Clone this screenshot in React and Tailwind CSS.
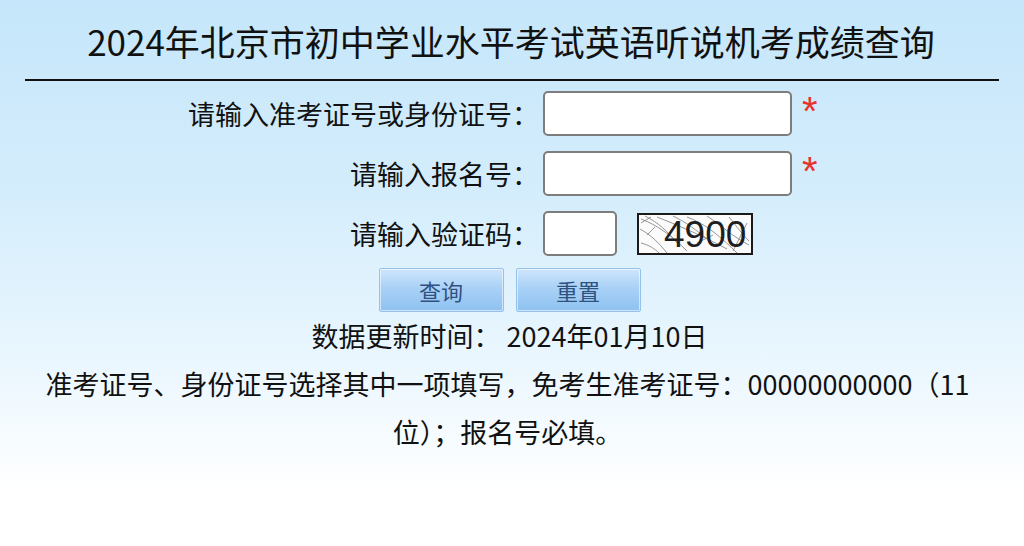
import React from "react";

const font = { fontFamily: '"Noto Sans CJK SC", "Noto Sans", sans-serif' };

function Captcha() {
  return (
    <svg width="116" height="42" viewBox="0 0 116 42" className="ml-[20px] block">
      <rect x="1" y="1" width="114" height="40" fill="#fbfbfb" stroke="#1a1a1a" strokeWidth="2" />
      <g stroke="#8a8a8a" strokeWidth="0.9" fill="none">
        <path d="M4 6 C20 12 34 22 50 38" />
        <path d="M8 3 C22 10 30 18 40 30" />
        <path d="M3 16 C14 22 22 30 30 40" />
        <path d="M20 4 C40 12 60 20 90 36" />
        <path d="M36 3 C50 10 58 16 70 26" />
        <path d="M50 4 C66 10 80 20 100 40" />
        <path d="M70 3 C84 12 96 24 112 32" />
        <path d="M4 30 C12 32 18 36 22 40" />
        <path d="M92 4 C100 14 106 22 112 28" />
        <path d="M10 22 L18 14" />
        <path d="M60 30 L76 22" />
        <path d="M96 38 L110 10" />
        <path d="M4 10 L14 4" />
      </g>
      <text
        x="27"
        y="34"
        fontSize="37"
        fill="#1e1e1e"
        style={{ fontFamily: '"Liberation Sans", Arial, sans-serif' }}
      >
        4900
      </text>
    </svg>
  );
}

function Btn({ children }) {
  return (
    <button className="w-[125px] h-[44px] rounded-[2px] border border-[#94c2ec] bg-[linear-gradient(to_bottom,#cfe6fc_0%,#a9d1f6_45%,#8ec2f1_100%)] shadow-[inset_0_0_0_1px_rgba(255,255,255,0.55)] text-[22px] text-[#2f5281] flex items-center justify-center leading-none">
      {children}
    </button>
  );
}

function Star() {
  return (
    <div
      className="ml-[10px] text-[#e8332a] text-[40px] leading-none -mt-[6px]"
      style={{ fontFamily: '"Liberation Sans", Arial, sans-serif' }}
    >
      *
    </div>
  );
}

export default function App() {
  return (
    <div
      className="w-[1024px] min-h-[546px] bg-[linear-gradient(to_bottom,#c5e6fa_0%,#d4edfc_35%,#e9f6fe_65%,#ffffff_90%)] text-[#111]"
      style={font}
    >
      <div className="h-[79px] flex items-center justify-center text-[35px] leading-none pt-[1px] pr-[2px]">
        2024年北京市初中学业水平考试英语听说机考成绩查询
      </div>
      <div className="mx-[25px] h-[2px] bg-[#111]" />
      <div className="mt-[10px] pl-[188px] flex flex-col gap-[15px]">
        <div className="flex items-center h-[45px]">
          <div className="w-[351px] text-right text-[27px] leading-none">请输入准考证号或身份证号：</div>
          <div className="ml-[4px] w-[249px] h-[45px] bg-white border-2 border-[#7d7d7d] rounded-[5px]" />
          <Star />
        </div>
        <div className="flex items-center h-[45px]">
          <div className="w-[351px] text-right text-[27px] leading-none">请输入报名号：</div>
          <div className="ml-[4px] w-[249px] h-[45px] bg-white border-2 border-[#7d7d7d] rounded-[5px]" />
          <Star />
        </div>
        <div className="flex items-center h-[45px]">
          <div className="w-[351px] text-right text-[27px] leading-none">请输入验证码：</div>
          <div className="ml-[4px] w-[74px] h-[45px] bg-white border-2 border-[#7d7d7d] rounded-[5px]" />
          <Captcha />
        </div>
      </div>
      <div className="mt-[12px] flex justify-center gap-[12px] pr-[5px]">
        <Btn>查询</Btn>
        <Btn>重置</Btn>
      </div>
      <div className="flex flex-col items-center text-[27px] leading-[48px] pr-[5px]">
        <div>数据更新时间：&nbsp;2024年01月10日</div>
        <div className="text-center pr-[4px]">
          准考证号、身份证号选择其中一项填写，免考生准考证号：00000000000（11
          <br />
          位）；报名号必填。
        </div>
      </div>
    </div>
  );
}
